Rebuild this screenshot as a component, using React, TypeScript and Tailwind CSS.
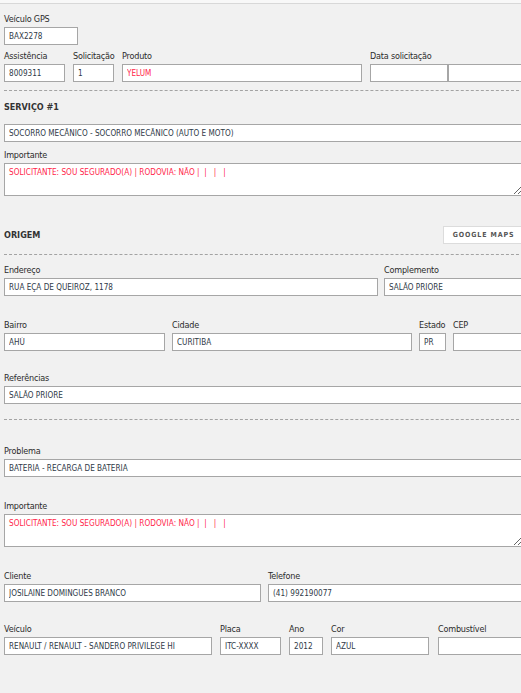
import React from 'react';

const font = "font-['DejaVu_Sans_Condensed','DejaVu_Sans',sans-serif]";

interface FieldProps {
  label?: string;
  value?: string;
  w: string;
  red?: boolean;
  className?: string;
}

function Label({ children }: { children: React.ReactNode }) {
  return (
    <span className="h-[14px] w-0 whitespace-nowrap text-[9px] leading-[13px] tracking-[-0.2px] text-[#2b2b2b]">
      {children}
    </span>
  );
}

function Field({ label, value = '', w, red = false, className = '' }: FieldProps) {
  return (
    <div className={`flex shrink-0 flex-col ${className}`}>
      {label !== undefined && <Label>{label}</Label>}
      <input
        readOnly
        value={value}
        className={`h-[18px] ${w} border border-[#a6a6a6] bg-white px-[4px] text-[8.1px] outline-none ${
          red ? 'text-[#ff1f4b]' : 'text-[#2f3a48]'
        }`}
      />
    </div>
  );
}

function Note({ text }: { text: string }) {
  return (
    <div className="flex flex-col">
      <Label>Importante</Label>
      <textarea
        readOnly
        value={text}
        className="h-[33px] w-[519px] border border-[#a6a6a6] bg-white px-[4px] pt-[2px] text-[8.2px] leading-[12px] text-[#ff1f4b] outline-none"
      />
    </div>
  );
}

function Dashed({ className = '' }: { className?: string }) {
  return <div className={`w-[520px] border-t border-dashed border-[#a3a3a3] ${className}`} />;
}

export default function App() {
  const nota = 'SOLICITANTE: SOU SEGURADO(A) | RODOVIA: NÃO |  |   |   |';

  return (
    <div className={`min-h-screen w-[521px] overflow-hidden bg-[#f1f1f1] ${font}`}>
      <div className="h-[4px] border-b border-[#d8d8d8] bg-[#f8f8f8]" />
      <div className="w-[530px] pl-[4px]">
        <Field label="Veículo GPS" value="BAX2278" w="w-[74px]" className="mt-[9px]" />

        <div className="mt-[5px] flex">
          <Field label="Assistência" value="8009311" w="w-[61px]" />
          <Field label="Solicitação" value="1" w="w-[41px]" className="ml-[8px]" />
          <Field label="Produto" value="YELUM" red w="w-[240px]" className="ml-[8px]" />
          <div className="ml-[8px] flex shrink-0 flex-col">
            <Label>Data solicitação</Label>
            <div className="flex">
              <input readOnly className="h-[18px] w-[78px] border border-[#a6a6a6] bg-white outline-none" />
              <input readOnly className="h-[18px] w-[90px] border border-[#a6a6a6] bg-white outline-none" />
            </div>
          </div>
        </div>

        <Dashed className="mt-[8px]" />

        <h3 className="mt-[9px] h-[14px] text-[9px] font-bold leading-[14px] text-[#333]">SERVIÇO #1</h3>

        <Field value="SOCORRO MECÂNICO - SOCORRO MECÂNICO (AUTO E MOTO)" w="w-[526px]" className="mt-[10px]" />

        <div className="mt-[7px]">
          <Note text={nota} />
        </div>

        <div className="mt-[30px] flex h-[18px] w-[520px] items-center">
          <h3 className="text-[9px] font-bold leading-[14px] text-[#333]">ORIGEM</h3>
          <button className="ml-auto h-[18px] w-[81px] border border-[#dcdcdc] bg-white text-[7px] font-bold tracking-[0.9px] text-[#555]">
            GOOGLE MAPS
          </button>
        </div>

        <Dashed className="mt-[10px]" />

        <div className="mt-[9px] flex">
          <Field label="Endereço" value="RUA EÇA DE QUEIROZ, 1178" w="w-[374px]" />
          <Field label="Complemento" value="SALÃO PRIORE" w="w-[150px]" className="ml-[6px]" />
        </div>

        <div className="mt-[23px] flex">
          <Field label="Bairro" value="AHÚ" w="w-[161px]" />
          <Field label="Cidade" value="CURITIBA" w="w-[240px]" className="ml-[7px]" />
          <Field label="Estado" value="PR" w="w-[27px]" className="ml-[7px]" />
          <Field label="CEP" w="w-[80px]" className="ml-[7px]" />
        </div>

        <Field label="Referências" value="SALÃO PRIORE" w="w-[526px]" className="mt-[21px]" />

        <Dashed className="mt-[15px]" />

        <Field label="Problema" value="BATERIA - RECARGA DE BATERIA" w="w-[526px]" className="mt-[25px]" />

        <div className="mt-[23px]">
          <Note text={nota} />
        </div>

        <div className="mt-[23px] flex">
          <Field label="Cliente" value="JOSILAINE DOMINGUES BRANCO" w="w-[257px]" />
          <Field label="Telefone" value="(41) 992190077" w="w-[260px]" className="ml-[7px]" />
        </div>

        <div className="mt-[21px] flex">
          <Field label="Veículo" value="RENAULT / RENAULT - SANDERO PRIVILEGE HI" w="w-[208px]" />
          <Field label="Placa" value="ITC-XXXX" w="w-[61px]" className="ml-[8px]" />
          <Field label="Ano" value="2012" w="w-[34px]" className="ml-[8px]" />
          <Field label="Cor" value="AZUL" w="w-[98px]" className="ml-[8px]" />
          <Field label="Combustível" w="w-[90px]" className="ml-[9px]" />
        </div>
      </div>
    </div>
  );
}
